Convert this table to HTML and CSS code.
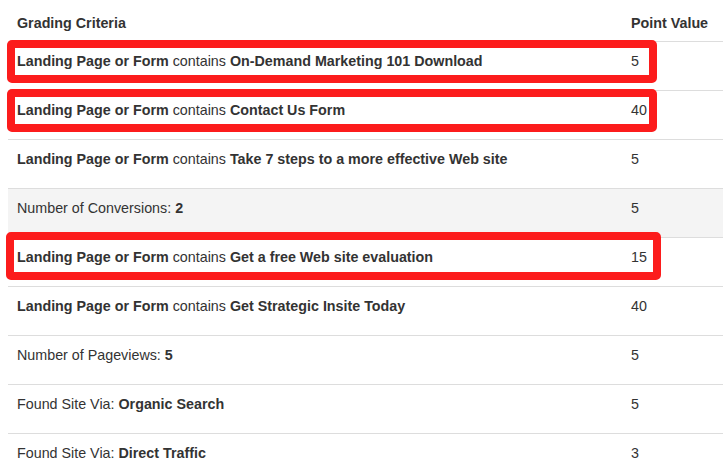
FILE: index.html
```html
<!DOCTYPE html>
<html>
<head>
<meta charset="utf-8">
<link rel="stylesheet" href="styles.css">
</head>
<body>
<div class="wrap">
  <div class="table">
    <div class="row head">
      <div class="cell">Grading Criteria</div>
      <div class="cell">Point Value</div>
    </div>
    <div class="row">
      <div class="cell"><b>Landing Page or Form</b> contains <b>On-Demand Marketing 101 Download</b></div>
      <div class="cell">5</div>
    </div>
    <div class="row">
      <div class="cell"><b>Landing Page or Form</b> contains <b>Contact Us Form</b></div>
      <div class="cell">40</div>
    </div>
    <div class="row">
      <div class="cell"><b>Landing Page or Form</b> contains <b>Take 7 steps to a more effective Web site</b></div>
      <div class="cell">5</div>
    </div>
    <div class="row shaded">
      <div class="cell">Number of Conversions: <b>2</b></div>
      <div class="cell">5</div>
    </div>
    <div class="row">
      <div class="cell"><b>Landing Page or Form</b> contains <b>Get a free Web site evaluation</b></div>
      <div class="cell">15</div>
    </div>
    <div class="row">
      <div class="cell"><b>Landing Page or Form</b> contains <b>Get Strategic Insite Today</b></div>
      <div class="cell">40</div>
    </div>
    <div class="row">
      <div class="cell">Number of Pageviews: <b>5</b></div>
      <div class="cell">5</div>
    </div>
    <div class="row">
      <div class="cell">Found Site Via: <b>Organic Search</b></div>
      <div class="cell">5</div>
    </div>
    <div class="row">
      <div class="cell">Found Site Via: <b>Direct Traffic</b></div>
      <div class="cell">3</div>
    </div>
  </div>
  <div class="mark mark-1"></div>
  <div class="mark mark-2"></div>
  <div class="mark mark-3"></div>
</div>
</body>
</html>
```

FILE: styles.css
```css
html, body {
  margin: 0;
  padding: 0;
  background: #fff;
}
body {
  font-family: "Liberation Sans", Arial, sans-serif;
  font-size: 14.3px;
  color: #333;
  width: 723px;
  height: 474px;
  overflow: hidden;
}
.wrap {
  position: relative;
  padding-left: 8px;
}
.table {
  display: flex;
  flex-direction: column;
}
.row {
  display: grid;
  grid-template-columns: 614px 1fr;
  border-top: 1px solid #dddddd;
  height: 49px;
  box-sizing: border-box;
}
.row.head {
  border-top: none;
  height: 41px;
  font-weight: bold;
}
.row.head .cell {
  padding-top: 13px;
}
.row.shaded {
  background: #f4f4f4;
}
.cell {
  padding: 9px 9px 0 9px;
  line-height: 20px;
  white-space: nowrap;
}
.cell b {
  font-weight: bold;
}
.mark {
  position: absolute;
  border: 8px solid #fc1c1c;
  border-radius: 5px;
  box-sizing: border-box;
}
.mark-1 {
  left: 7px;
  top: 40px;
  width: 650px;
  height: 43px;
}
.mark-2 {
  left: 7px;
  top: 89px;
  width: 650px;
  height: 43px;
}
.mark-3 {
  left: 6px;
  top: 232px;
  width: 655px;
  height: 48px;
}
```
